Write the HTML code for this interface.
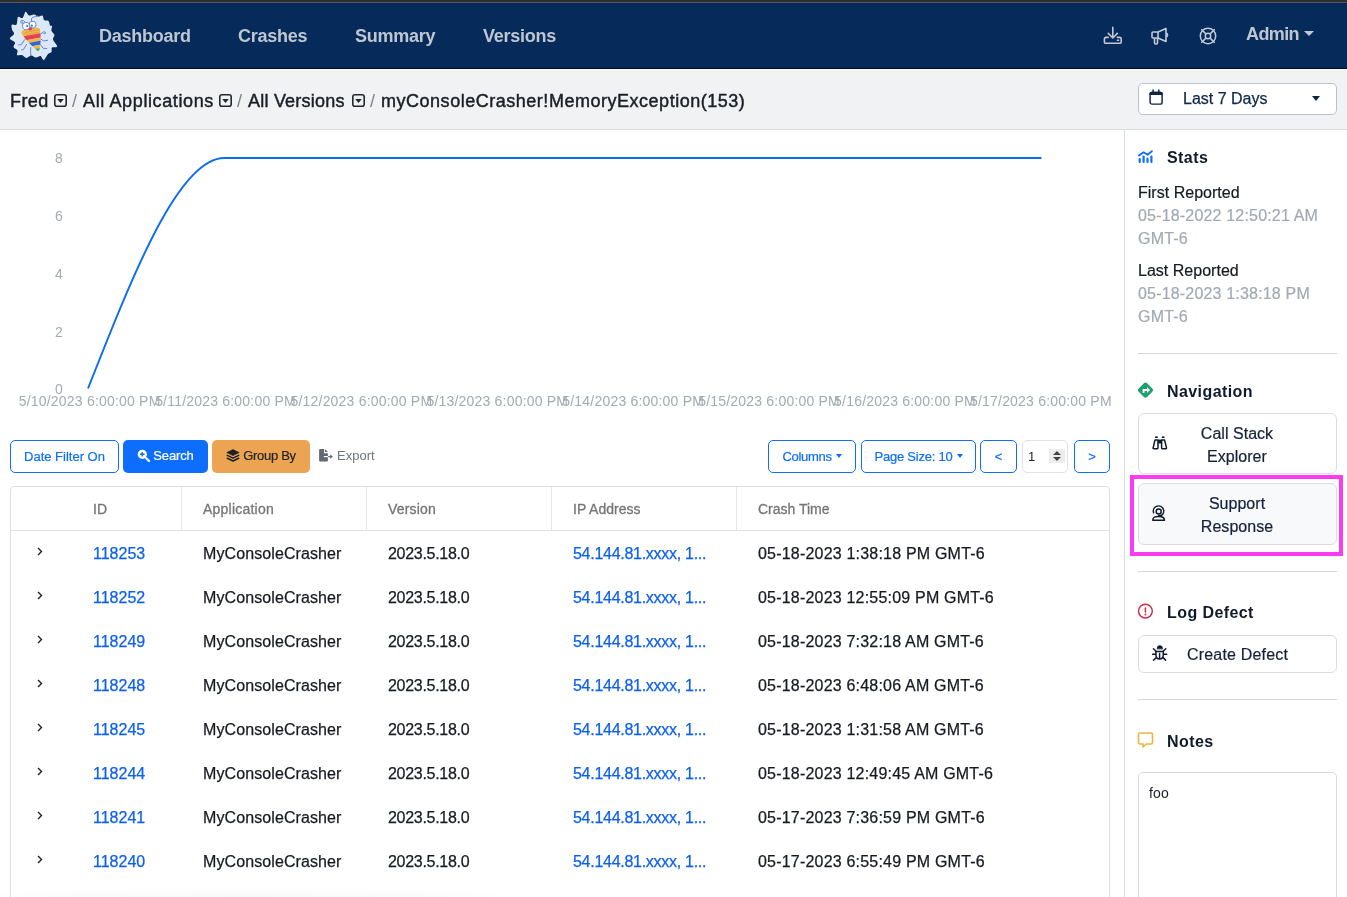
<!DOCTYPE html>
<html><head><meta charset="utf-8">
<style>
*{box-sizing:border-box;margin:0;padding:0}
html,body{width:1347px;height:897px;overflow:hidden;background:#fff;font-family:"Liberation Sans",sans-serif;color:#1b1f27}
.a{position:absolute;white-space:nowrap}
#topstrip{left:0;top:0;width:1347px;height:3px;background:linear-gradient(to bottom,#2f2e31 0,#2f2e31 2px,#5b5b5b 2px,#5b5b5b 3px)}
#nav{left:0;top:3px;width:1347px;height:66px;background:#062a59;border-top:1px solid #012557;border-bottom:1px solid #020a16}
.navlink{top:26px;font-size:18px;font-weight:bold;color:#bec6d2;line-height:20px;letter-spacing:-0.25px}
#sub{left:0;top:69px;width:1347px;height:61px;background:#f1f2f4;border-top:1px solid #fdfdfd;border-bottom:1px solid #d9dde1}
.bc{top:91px;font-size:18px;color:#1b1f27;line-height:20px;-webkit-text-stroke:0.45px currentColor}
.sep{color:#7f848a;-webkit-text-stroke:0}
.ddbox{display:block;position:absolute;width:12.5px;height:13px;border:1.6px solid #23272e;border-radius:2.5px}
.ddbox:after{content:"";position:absolute;left:1.35px;top:3.2px;border-left:3.3px solid transparent;border-right:3.3px solid transparent;border-top:3.9px solid #23272e}
#datepick{left:1138px;top:83px;width:199px;height:32px;background:#fff;border:1px solid #b9c2cc;border-radius:5px}
.ylab{font-size:14px;color:#a3aab3;line-height:14px}
.xlab{font-size:14px;color:#a3aab3;line-height:14px;top:394px;letter-spacing:0.2px;width:200px;text-align:center}
.btn{height:33px;top:440px;border-radius:5px;font-size:13px;line-height:31px;text-align:center;-webkit-text-stroke:0.2px currentColor}
.obtn{border:1px solid #0d6efd;color:#0d6efd;background:#fff}
.caret{display:inline-block;width:0;height:0;border-left:3px solid transparent;border-right:3px solid transparent;border-top:4px solid currentColor;vertical-align:3px;margin-left:4px}
#table{left:10px;top:486px;width:1100px;height:430px;border:1px solid #dee2e6;border-radius:4px}
.th{top:501px;font-size:14px;color:#757575;line-height:16px;-webkit-text-stroke:0.3px currentColor}
.vdiv{top:487px;width:1px;height:44px;background:#e3e6ea}
.td{font-size:16px;line-height:18px;color:#161a22;-webkit-text-stroke:0.25px currentColor}
.lnk{color:#0d60f0}
.chev{font-size:14px}
#side{left:1124px;top:129px;width:1px;height:768px;background:#d9dde2}
.sh{font-size:16px;font-weight:bold;color:#0f1a2a;line-height:18px;letter-spacing:0.42px}
.sl{font-size:16px;color:#161a22;line-height:23px;letter-spacing:0.02px;-webkit-text-stroke:0.2px currentColor}
.sv{font-size:16px;color:#a1a9b2;line-height:23px;letter-spacing:0.18px;-webkit-text-stroke:0.2px currentColor}
.hr{left:1138px;width:199px;height:1px;background:#d6dade}
.sbtn{left:1138px;width:199px;border:1px solid #d9dde2;border-radius:6px;background:#fff}
.sbt{font-size:16px;color:#14213a;line-height:23px;text-align:center;letter-spacing:0.03px;-webkit-text-stroke:0.2px currentColor}
</style></head>
<body><div id="root" style="position:absolute;left:0;top:0;width:1347px;height:897px;overflow:hidden;will-change:transform">
<div id="topstrip" class="a"></div>
<div id="nav" class="a"></div>
<!-- logo -->
<svg class="a" style="left:0;top:0" width="70" height="70" viewBox="0 0 70 70">
  <path d="M25.60 11.80 C26.68 11.38 27.60 15.05 29.00 15.50 C30.40 15.95 32.50 14.33 34.00 14.50 C35.50 14.67 36.58 16.32 38.00 16.50 C39.42 16.68 41.50 15.02 42.50 15.60 C43.50 16.18 43.00 19.10 44.00 20.00 C45.00 20.90 47.50 20.08 48.50 21.00 C49.50 21.92 49.42 24.67 50.00 25.50 C50.58 26.33 51.75 25.08 52.00 26.00 C52.25 26.92 51.08 29.50 51.50 31.00 C51.92 32.50 54.25 33.58 54.50 35.00 C54.75 36.42 52.55 37.58 53.00 39.50 C53.45 41.42 57.37 45.17 57.20 46.50 C57.03 47.83 52.95 46.58 52.00 47.50 C51.05 48.42 52.17 50.92 51.50 52.00 C50.83 53.08 49.28 52.67 48.00 54.00 C46.72 55.33 45.05 59.67 43.80 60.00 C42.55 60.33 41.80 56.42 40.50 56.00 C39.20 55.58 37.58 57.58 36.00 57.50 C34.42 57.42 32.58 55.42 31.00 55.50 C29.42 55.58 28.00 58.08 26.50 58.00 C25.00 57.92 23.58 55.50 22.00 55.00 C20.42 54.50 17.75 55.75 17.00 55.00 C16.25 54.25 18.08 51.83 17.50 50.50 C16.92 49.17 13.92 48.33 13.50 47.00 C13.08 45.67 15.62 43.90 15.00 42.50 C14.38 41.10 9.97 40.02 9.80 38.60 C9.63 37.18 13.63 35.52 14.00 34.00 C14.37 32.48 12.37 31.03 12.00 29.50 C11.63 27.97 11.05 25.63 11.80 24.80 C12.55 23.97 15.47 25.80 16.50 24.50 C17.53 23.20 17.00 18.08 18.00 17.00 C19.00 15.92 21.23 18.87 22.50 18.00 C23.77 17.13 24.52 12.22 25.60 11.80 Z" fill="#dce8f7"/>
  <defs><clipPath id="cone"><path d="M22.5 31.5 Q22 27.8 30 27.8 Q41.5 27.5 41.5 31 Q41 42 37.2 50.5 Q35.5 53 34 50.5 Q26.5 41 22.5 31.5 Z"/></clipPath></defs>
  <g transform="rotate(-11 33 38)">
    <g fill="none" stroke="#3a74d0" stroke-width="0.75" stroke-linecap="round">
      <path d="M28.5 21 Q27 18 24.5 18.8 Q23 20.5 25 21.5 Q26.5 21.8 26 20.5"/>
      <path d="M34.5 21.5 Q34.5 17.5 37.5 17.5 Q40 18 42 17"/>
      <path d="M24.5 38 L20 42.5 L17.5 42"/><path d="M25.5 43 L21.5 47.5 L19.5 47.5"/><path d="M29 47 L28 51 L27.5 55"/>
      <path d="M41.5 35.5 L44.5 34 Q47 34 46 36 Q45 37 44.5 35.5"/><path d="M40.5 40.5 L43 43 L47 43"/><path d="M39 46 L41 50 L44.5 51"/>
    </g>
    <g clip-path="url(#cone)">
      <rect x="20" y="26" width="26" height="8.5" fill="#f4b64a"/>
      <rect x="20" y="34.5" width="26" height="4.5" fill="#e6424e"/>
      <rect x="20" y="39" width="26" height="3" fill="#f4b64a"/>
      <rect x="20" y="42" width="26" height="3.8" fill="#2f65d8"/>
      <rect x="20" y="45.8" width="26" height="3.2" fill="#f4b64a"/>
      <rect x="20" y="49" width="26" height="4.5" fill="#37b25b"/>
    </g>
    <path d="M25.5 31.8 Q33 30 40 31.5 M27 34 Q33 32.8 39.5 33.8" fill="none" stroke="#c98e35" stroke-width="0.5"/>
    <circle cx="28.6" cy="25" r="3.6" fill="#fff" stroke="#3a74d0" stroke-width="0.75"/>
    <circle cx="35.2" cy="24.8" r="3.4" fill="#fff" stroke="#3a74d0" stroke-width="0.75"/>
    <circle cx="29.6" cy="25.2" r="1.1" fill="#3a74d0"/><circle cx="34.2" cy="25.6" r="1.1" fill="#3a74d0"/>
    <ellipse cx="32" cy="28.6" rx="2" ry="1.4" fill="#e6424e"/>
  </g>
</svg>
<div class="a navlink" style="left:99px">Dashboard</div>
<div class="a navlink" style="left:238px">Crashes</div>
<div class="a navlink" style="left:355px">Summary</div>
<div class="a navlink" style="left:483px">Versions</div>
<!-- nav icons -->
<svg class="a" style="left:1103px;top:26px" width="20" height="19" viewBox="0 0 20 19" fill="none" stroke="#c2c9d5" stroke-width="1.6" stroke-linecap="round" stroke-linejoin="round"><path d="M9.8 1.2 V12 M5.3 7.4 L9.8 12 L14.3 7.4"/><path d="M5.2 11.4 H3 Q1.4 11.4 1.4 13 V15.9 Q1.4 17.3 2.8 17.3 H16.6 Q18.2 17.3 18.2 15.9 V13 Q18.2 11.4 16.6 11.4 H14.4"/><path d="M14.4 14.2 H15.6"/></svg>
<svg class="a" style="left:1151px;top:27px" width="19" height="18" viewBox="0 0 19 18" fill="none" stroke="#c2c9d5" stroke-width="1.6" stroke-linejoin="round">
  <path d="M2 5 H7 L15 1.5 V14.5 L7 11 H2 Q1 11 1 10 V6 Q1 5 2 5 Z"/>
  <path d="M7 5 V11"/>
  <path d="M3.5 11 V16 Q3.5 17 4.5 17 H5.5 Q6.5 17 6.5 16 V11"/>
  <path d="M15.5 6 Q17.5 8 15.5 10"/>
</svg>
<svg class="a" style="left:1199px;top:27px" width="18" height="18" viewBox="0 0 18 18" fill="none" stroke="#c2c9d5" stroke-width="1.5"><circle cx="9" cy="9" r="7.7"/><circle cx="9" cy="9" r="2.7"/><path d="M2.3 2.3 L7.1 7.1 M15.7 2.3 L10.9 7.1 M2.3 15.7 L7.1 10.9 M15.7 15.7 L10.9 10.9"/></svg>
<div class="a navlink" style="left:1246px;top:24px;letter-spacing:-0.6px">Admin</div>
<div class="a" style="left:1304px;top:31px;width:0;height:0;border-left:5px solid transparent;border-right:5px solid transparent;border-top:5px solid #c2c9d5"></div>

<div id="sub" class="a"></div>
<div class="a bc" style="left:10px;letter-spacing:0.4px">Fred</div>
<svg class="a" style="left:54px;top:94px" width="13" height="13" viewBox="0 0 13 13"><rect x="0.8" y="0.8" width="11.4" height="11.6" rx="2.2" fill="none" stroke="#23272e" stroke-width="1.6"/><path d="M3.2 5.1 H9.8 L6.5 8.9 Z" fill="#23272e"/></svg>
<div class="a bc sep" style="left:72px">/</div>
<div class="a bc" style="left:83px;letter-spacing:0.62px">All Applications</div>
<svg class="a" style="left:219px;top:94px" width="13" height="13" viewBox="0 0 13 13"><rect x="0.8" y="0.8" width="11.4" height="11.6" rx="2.2" fill="none" stroke="#23272e" stroke-width="1.6"/><path d="M3.2 5.1 H9.8 L6.5 8.9 Z" fill="#23272e"/></svg>
<div class="a bc sep" style="left:237px">/</div>
<div class="a bc" style="left:248px;letter-spacing:0.22px">All Versions</div>
<svg class="a" style="left:352px;top:94px" width="13" height="13" viewBox="0 0 13 13"><rect x="0.8" y="0.8" width="11.4" height="11.6" rx="2.2" fill="none" stroke="#23272e" stroke-width="1.6"/><path d="M3.2 5.1 H9.8 L6.5 8.9 Z" fill="#23272e"/></svg>
<div class="a bc sep" style="left:370px">/</div>
<div class="a bc" style="left:381px;letter-spacing:0.52px">myConsoleCrasher!MemoryException(153)</div>
<div id="datepick" class="a"></div>
<svg class="a" style="left:1148px;top:89px" width="16" height="16" viewBox="0 0 16 16"><rect x="2.1" y="3.5" width="12" height="11.6" rx="1.9" fill="none" stroke="#0e2748" stroke-width="1.45"/><path d="M1.4 5.9 V4.8 Q1.4 2.8 3.4 2.8 H12.8 Q14.8 2.8 14.8 4.8 V5.9 Z" fill="#0e2748"/><path d="M5.1 0.9 V3.2 M10.8 0.9 V3.2" stroke="#0e2748" stroke-width="1.5" stroke-linecap="round"/></svg>
<div class="a" style="left:1183px;top:90px;font-size:16px;line-height:18px;color:#0e2748;-webkit-text-stroke:0.25px currentColor">Last 7 Days</div>
<div class="a" style="left:1312px;top:96px;width:0;height:0;border-left:4.5px solid transparent;border-right:4.5px solid transparent;border-top:5px solid #0e2748"></div>

<!-- chart -->
<div class="a ylab" style="left:55px;top:151px">8</div>
<div class="a ylab" style="left:55px;top:209px">6</div>
<div class="a ylab" style="left:55px;top:267px">4</div>
<div class="a ylab" style="left:55px;top:325px">2</div>
<div class="a ylab" style="left:55px;top:382px">0</div>
<svg class="a" style="left:0;top:130px" width="1124" height="300" viewBox="0 130 1124 300">
  <path d="M88 388.5 C133.4 273 178.9 158 224.3 158 L1041.5 158" fill="none" stroke="#0d6cf6" stroke-width="1.9"/>
</svg>
<div class="a xlab" style="left:-10.4px">5/10/2023 6:00:00 PM</div>
<div class="a xlab" style="left:125.5px">5/11/2023 6:00:00 PM</div>
<div class="a xlab" style="left:261.4px">5/12/2023 6:00:00 PM</div>
<div class="a xlab" style="left:397.3px">5/13/2023 6:00:00 PM</div>
<div class="a xlab" style="left:533.2px">5/14/2023 6:00:00 PM</div>
<div class="a xlab" style="left:669.1px">5/15/2023 6:00:00 PM</div>
<div class="a xlab" style="left:805.0px">5/16/2023 6:00:00 PM</div>
<div class="a xlab" style="left:940.9px">5/17/2023 6:00:00 PM</div>

<!-- toolbar -->
<div class="a btn obtn" style="left:10px;width:109px">Date Filter On</div>
<div class="a btn" style="left:123px;width:85px;background:#0d6efd;color:#fff;letter-spacing:-0.15px"><svg width="13" height="13" viewBox="0 0 13 13" style="vertical-align:-2px;margin-right:3px"><circle cx="5.3" cy="5.3" r="4.6" fill="#fff"/><path d="M8.5 8.5 L12 12" stroke="#fff" stroke-width="2.2" stroke-linecap="round"/><path d="M5.3 3 V7.6 M3 5.3 H7.6" stroke="#0d6efd" stroke-width="1.4"/></svg>Search</div>
<div class="a btn" style="left:212px;width:98px;background:#eca452;color:#212529;letter-spacing:-0.3px"><svg width="14" height="13" viewBox="0 0 14 13" style="vertical-align:-2px;margin-right:3px"><path d="M7 0.6 L13.2 3.6 L7 6.6 L0.8 3.6 Z" fill="#1b1f27" stroke="#1b1f27" stroke-width="0.6" stroke-linejoin="round"/><path d="M1.3 6.4 L7 9.1 L12.7 6.4 M1.3 9.3 L7 12 L12.7 9.3" fill="none" stroke="#1b1f27" stroke-width="1.5" stroke-linecap="round" stroke-linejoin="round"/></svg>Group By</div>
<svg class="a" style="left:319px;top:448px" width="15" height="15" viewBox="0 0 15 15"><path d="M1.1 1.1 H5 V5.2 H8.9 V12.5 Q8.9 13.5 7.9 13.5 H1.1 Q0.1 13.5 0.1 12.5 V2.1 Q0.1 1.1 1.1 1.1 Z M5.9 1.1 L8.9 4.1 H5.9 Z" fill="#5f6973"/><rect x="4.8" y="8" width="4.4" height="1.2" fill="#fff"/><path d="M9.2 8.6 H12.3" stroke="#5f6973" stroke-width="1.2"/><path d="M11.2 6.4 L13.9 8.6 L11.2 10.8 Z" fill="#5f6973"/></svg>
<div class="a" style="left:337px;top:448px;font-size:13px;line-height:15px;color:#6c757d">Export</div>

<div class="a btn obtn" style="left:768px;width:88px;letter-spacing:-0.3px">Columns<span class="caret"></span></div>
<div class="a btn obtn" style="left:861px;width:115px;letter-spacing:-0.22px">Page Size: 10<span class="caret"></span></div>
<div class="a btn obtn" style="left:980px;width:37px">&lt;</div>
<div class="a" style="left:1022px;top:440px;width:46px;height:33px;border:1px solid #dee2e6;border-radius:5px;background:#fff"></div>
<div class="a" style="left:1028px;top:449px;font-size:13px;line-height:15px;color:#212529">1</div>
<div class="a" style="left:1049px;top:449px;width:16px;height:14px;background:#ececec"></div>
<div class="a" style="left:1053px;top:451px;width:0;height:0;border-left:4px solid transparent;border-right:4px solid transparent;border-bottom:4px solid #444"></div>
<div class="a" style="left:1053px;top:457px;width:0;height:0;border-left:4px solid transparent;border-right:4px solid transparent;border-top:4px solid #444"></div>
<div class="a btn obtn" style="left:1074px;width:36px">&gt;</div>

<!-- table -->
<div id="table" class="a"></div>
<div class="a" style="left:11px;top:530px;width:1098px;height:1px;background:#dee2e6"></div>
<div class="a vdiv" style="left:181px"></div>
<div class="a vdiv" style="left:366px"></div>
<div class="a vdiv" style="left:551px"></div>
<div class="a vdiv" style="left:736px"></div>
<div class="a th" style="left:93px">ID</div>
<div class="a th" style="left:203px;letter-spacing:0.22px">Application</div>
<div class="a th" style="left:388px;letter-spacing:0.18px">Version</div>
<div class="a th" style="left:573px">IP Address</div>
<div class="a th" style="left:758px">Crash Time</div>
<div id="rows">
<svg class="a" style="left:37px;top:547px" width="6" height="9" viewBox="0 0 6 9"><path d="M1 1 L4.5 4.5 L1 8" fill="none" stroke="#1b1f27" stroke-width="1.4"/></svg>
<div class="a td lnk" style="left:93px;top:545px">118253</div>
<div class="a td" style="left:203px;top:545px;letter-spacing:0.1px">MyConsoleCrasher</div>
<div class="a td" style="left:388px;top:545px;letter-spacing:-0.3px">2023.5.18.0</div>
<div class="a td lnk" style="left:573px;top:545px;letter-spacing:-0.28px">54.144.81.xxxx, 1...</div>
<div class="a td" style="left:758px;top:545px;letter-spacing:0.2px">05-18-2023 1:38:18 PM GMT-6</div>
<svg class="a" style="left:37px;top:591px" width="6" height="9" viewBox="0 0 6 9"><path d="M1 1 L4.5 4.5 L1 8" fill="none" stroke="#1b1f27" stroke-width="1.4"/></svg>
<div class="a td lnk" style="left:93px;top:589px">118252</div>
<div class="a td" style="left:203px;top:589px;letter-spacing:0.1px">MyConsoleCrasher</div>
<div class="a td" style="left:388px;top:589px;letter-spacing:-0.3px">2023.5.18.0</div>
<div class="a td lnk" style="left:573px;top:589px;letter-spacing:-0.28px">54.144.81.xxxx, 1...</div>
<div class="a td" style="left:758px;top:589px;letter-spacing:0.2px">05-18-2023 12:55:09 PM GMT-6</div>
<svg class="a" style="left:37px;top:635px" width="6" height="9" viewBox="0 0 6 9"><path d="M1 1 L4.5 4.5 L1 8" fill="none" stroke="#1b1f27" stroke-width="1.4"/></svg>
<div class="a td lnk" style="left:93px;top:633px">118249</div>
<div class="a td" style="left:203px;top:633px;letter-spacing:0.1px">MyConsoleCrasher</div>
<div class="a td" style="left:388px;top:633px;letter-spacing:-0.3px">2023.5.18.0</div>
<div class="a td lnk" style="left:573px;top:633px;letter-spacing:-0.28px">54.144.81.xxxx, 1...</div>
<div class="a td" style="left:758px;top:633px;letter-spacing:0.2px">05-18-2023 7:32:18 AM GMT-6</div>
<svg class="a" style="left:37px;top:679px" width="6" height="9" viewBox="0 0 6 9"><path d="M1 1 L4.5 4.5 L1 8" fill="none" stroke="#1b1f27" stroke-width="1.4"/></svg>
<div class="a td lnk" style="left:93px;top:677px">118248</div>
<div class="a td" style="left:203px;top:677px;letter-spacing:0.1px">MyConsoleCrasher</div>
<div class="a td" style="left:388px;top:677px;letter-spacing:-0.3px">2023.5.18.0</div>
<div class="a td lnk" style="left:573px;top:677px;letter-spacing:-0.28px">54.144.81.xxxx, 1...</div>
<div class="a td" style="left:758px;top:677px;letter-spacing:0.2px">05-18-2023 6:48:06 AM GMT-6</div>
<svg class="a" style="left:37px;top:723px" width="6" height="9" viewBox="0 0 6 9"><path d="M1 1 L4.5 4.5 L1 8" fill="none" stroke="#1b1f27" stroke-width="1.4"/></svg>
<div class="a td lnk" style="left:93px;top:721px">118245</div>
<div class="a td" style="left:203px;top:721px;letter-spacing:0.1px">MyConsoleCrasher</div>
<div class="a td" style="left:388px;top:721px;letter-spacing:-0.3px">2023.5.18.0</div>
<div class="a td lnk" style="left:573px;top:721px;letter-spacing:-0.28px">54.144.81.xxxx, 1...</div>
<div class="a td" style="left:758px;top:721px;letter-spacing:0.2px">05-18-2023 1:31:58 AM GMT-6</div>
<svg class="a" style="left:37px;top:767px" width="6" height="9" viewBox="0 0 6 9"><path d="M1 1 L4.5 4.5 L1 8" fill="none" stroke="#1b1f27" stroke-width="1.4"/></svg>
<div class="a td lnk" style="left:93px;top:765px">118244</div>
<div class="a td" style="left:203px;top:765px;letter-spacing:0.1px">MyConsoleCrasher</div>
<div class="a td" style="left:388px;top:765px;letter-spacing:-0.3px">2023.5.18.0</div>
<div class="a td lnk" style="left:573px;top:765px;letter-spacing:-0.28px">54.144.81.xxxx, 1...</div>
<div class="a td" style="left:758px;top:765px;letter-spacing:0.2px">05-18-2023 12:49:45 AM GMT-6</div>
<svg class="a" style="left:37px;top:811px" width="6" height="9" viewBox="0 0 6 9"><path d="M1 1 L4.5 4.5 L1 8" fill="none" stroke="#1b1f27" stroke-width="1.4"/></svg>
<div class="a td lnk" style="left:93px;top:809px">118241</div>
<div class="a td" style="left:203px;top:809px;letter-spacing:0.1px">MyConsoleCrasher</div>
<div class="a td" style="left:388px;top:809px;letter-spacing:-0.3px">2023.5.18.0</div>
<div class="a td lnk" style="left:573px;top:809px;letter-spacing:-0.28px">54.144.81.xxxx, 1...</div>
<div class="a td" style="left:758px;top:809px;letter-spacing:0.2px">05-17-2023 7:36:59 PM GMT-6</div>
<svg class="a" style="left:37px;top:855px" width="6" height="9" viewBox="0 0 6 9"><path d="M1 1 L4.5 4.5 L1 8" fill="none" stroke="#1b1f27" stroke-width="1.4"/></svg>
<div class="a td lnk" style="left:93px;top:853px">118240</div>
<div class="a td" style="left:203px;top:853px;letter-spacing:0.1px">MyConsoleCrasher</div>
<div class="a td" style="left:388px;top:853px;letter-spacing:-0.3px">2023.5.18.0</div>
<div class="a td lnk" style="left:573px;top:853px;letter-spacing:-0.28px">54.144.81.xxxx, 1...</div>
<div class="a td" style="left:758px;top:853px;letter-spacing:0.2px">05-17-2023 6:55:49 PM GMT-6</div>
</div>

<!-- sidebar -->
<div id="side" class="a"></div>
<svg class="a" style="left:1138px;top:149px" width="15" height="14" viewBox="0 0 15 14" fill="#0d6efd"><rect x="0.6" y="9" width="2.2" height="5" rx="1.1"/><rect x="4.5" y="6.5" width="2.2" height="7.5" rx="1.1"/><rect x="8.4" y="8.6" width="2.2" height="5.4" rx="1.1"/><rect x="12.3" y="6.5" width="2.2" height="7.5" rx="1.1"/><path d="M0.9 6.5 L5.6 3.2 L9.6 5.8 L13.9 2.2" fill="none" stroke="#0d6efd" stroke-width="1.8" stroke-linecap="round" stroke-linejoin="round"/></svg>
<div class="a sh" style="left:1167px;top:149px">Stats</div>
<div class="a sl" style="left:1138px;top:181px">First Reported</div>
<div class="a sv" style="left:1138px;top:204px">05-18-2022 12:50:21 AM</div>
<div class="a sv" style="left:1138px;top:227px">GMT-6</div>
<div class="a sl" style="left:1138px;top:259px">Last Reported</div>
<div class="a sv" style="left:1138px;top:282px">05-18-2023 1:38:18 PM</div>
<div class="a sv" style="left:1138px;top:305px">GMT-6</div>
<div class="a hr" style="top:353px"></div>

<svg class="a" style="left:1137px;top:382px" width="17" height="17" viewBox="0 0 17 17"><rect x="2.6" y="2.2" width="11.8" height="11.8" rx="2.2" transform="rotate(45 8.5 8.1)" fill="#1f9e70"/><path d="M5.6 11 V7.4 Q5.6 7 6 7 H10.2 V8.9 H7.5 V11 Z M10 4.9 L13.1 7.95 L10 11 Z" fill="#fff"/></svg>
<div class="a sh" style="left:1167px;top:383px">Navigation</div>
<div class="a sbtn" style="left:1138px;top:413px;height:61px"></div>
<svg class="a" style="left:1152px;top:436px" width="16" height="14" viewBox="0 0 16 14" fill="none" stroke="#0f1a2a" stroke-width="1.5" stroke-linejoin="round"><path d="M6 4.1 H3 L1.1 11.9 Q1 12.7 1.8 12.7 H5.3 Q6 12.7 6 12 Z M9.6 4.1 H12.6 L14.5 11.9 Q14.6 12.7 13.8 12.7 H10.3 Q9.6 12.7 9.6 12 Z"/><rect x="6" y="3.6" width="3.6" height="3.9" fill="#0f1a2a" stroke="none"/><ellipse cx="4.4" cy="1.2" rx="1.5" ry="0.85" fill="#0f1a2a" stroke="none"/><ellipse cx="11.2" cy="1.2" rx="1.5" ry="0.85" fill="#0f1a2a" stroke="none"/></svg>
<div class="a sbt" style="left:1168px;top:422px;width:138px">Call Stack<br>Explorer</div>

<div class="a" style="left:1130px;top:475px;width:213px;height:81px;border:4px solid #fc3af4"></div>
<div class="a sbtn" style="left:1138px;top:483px;height:62px;background:#f8f9fb"></div>
<svg class="a" style="left:1151px;top:504px" width="15" height="18" viewBox="0 0 15 18" fill="none" stroke="#0f1a2a" stroke-width="1.5" stroke-linecap="round"><path d="M2.6 8.8 A5.2 5.2 0 1 1 10.6 11.3 Q9.5 11.5 7.7 11.5"/><circle cx="7.7" cy="7.6" r="2.5"/><path d="M1.8 16.2 C1.8 13.1 3.6 12.5 7.6 12.5 C11.6 12.5 13.5 13.1 13.5 16.2 Z" stroke-linejoin="round"/></svg>
<div class="a sbt" style="left:1168px;top:492px;width:138px">Support<br>Response</div>
<div class="a hr" style="top:571px"></div>

<svg class="a" style="left:1137px;top:603px" width="17" height="17" viewBox="0 0 17 17"><circle cx="8.4" cy="8.1" r="6.9" fill="none" stroke="#cf2a4e" stroke-width="1.45"/><path d="M8.4 4.9 V9" stroke="#cf2a4e" stroke-width="1.5" stroke-linecap="round"/><circle cx="8.4" cy="11.5" r="0.95" fill="#cf2a4e"/></svg>
<div class="a sh" style="left:1167px;top:604px">Log Defect</div>
<div class="a sbtn" style="left:1138px;top:635px;height:38px"></div>
<svg class="a" style="left:1152px;top:645px" width="16" height="16" viewBox="0 0 16 16" fill="none" stroke="#0f1a2a" stroke-width="1.5" stroke-linecap="round"><path d="M5.1 3.7 Q5.1 0.6 7.8 0.6 Q10.6 0.6 10.6 3.7 Z" fill="#0f1a2a" stroke-width="0.6"/><path d="M3.9 6.4 H11.3 V9.6 Q11.3 14.1 7.6 14.1 Q3.9 14.1 3.9 9.6 Z" stroke-linejoin="round"/><path d="M7.6 8.6 V13.4 M1.5 3.8 L4 6.3 M13.7 3.8 L11.3 6.3 M0.6 9.2 H3.6 M11.6 9.2 H14.7 M1.5 15.1 L4.2 12.7 M13.6 15.1 L11.4 12.9"/></svg>
<div class="a sbt" style="left:1187px;top:643px;letter-spacing:0.18px">Create Defect</div>
<div class="a hr" style="top:699px"></div>

<svg class="a" style="left:1137px;top:732px" width="17" height="17" viewBox="0 0 17 17" fill="none" stroke="#f0b43c" stroke-width="1.6" stroke-linejoin="round"><path d="M1.5 2.5 Q1.5 1 3 1 H14 Q15.5 1 15.5 2.5 V10.5 Q15.5 12 14 12 H9.3 L6 15 V12 H3 Q1.5 12 1.5 10.5 Z"/></svg>
<div class="a sh" style="left:1167px;top:733px">Notes</div>
<div class="a" style="left:1138px;top:772px;width:199px;height:140px;border:1px solid #d6dade;border-radius:5px"></div>
<div class="a" style="left:1149px;top:786px;font-size:14px;line-height:15px;color:#1b1f27;letter-spacing:0.1px">foo</div>
<div class="a" style="left:0;top:884px;width:560px;height:26px;background:radial-gradient(ellipse 300px 13px at 250px 16px,rgba(0,0,0,0.035),rgba(0,0,0,0))"></div>
</div></body></html>
